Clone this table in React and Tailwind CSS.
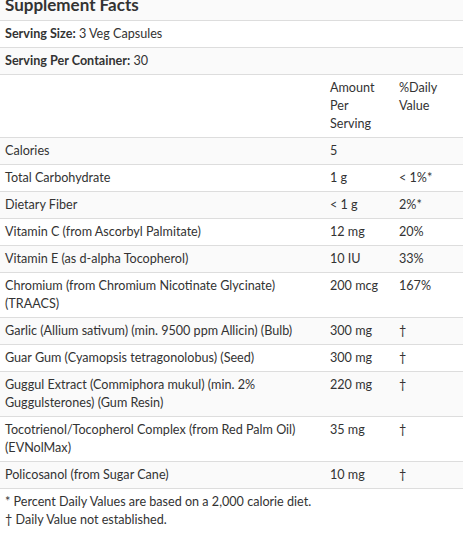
import React from 'react';

const rows = [
    { name: 'Calories', amount: '5', dv: '' },
    { name: 'Total Carbohydrate', amount: '1 g', dv: '< 1%*' },
    { name: 'Dietary Fiber', amount: '< 1 g', dv: '2%*' },
    { name: 'Vitamin C (from Ascorbyl Palmitate)', amount: '12 mg', dv: '20%' },
    { name: 'Vitamin E (as d-alpha Tocopherol)', amount: '10 IU', dv: '33%' },
    { name: 'Chromium (from Chromium Nicotinate Glycinate) (TRAACS)', amount: '200 mcg', dv: '167%' },
    { name: 'Garlic (Allium sativum) (min. 9500 ppm Allicin) (Bulb)', amount: '300 mg', dv: '†' },
    { name: 'Guar Gum (Cyamopsis tetragonolobus) (Seed)', amount: '300 mg', dv: '†' },
    { name: 'Guggul Extract (Commiphora mukul) (min. 2% Guggulsterones) (Gum Resin)', amount: '220 mg', dv: '†' },
    { name: 'Tocotrienol/Tocopherol Complex (from Red Palm Oil) (EVNolMax)', amount: '35 mg', dv: '†' },
    { name: 'Policosanol (from Sugar Cane)', amount: '10 mg', dv: '†' },
];

function Row({ name, amount, dv, shaded }) {
    return (
        <div className={`grid grid-cols-[325px_69px_1fr] border-b border-[#dddddd] ${shaded ? 'bg-[#fafafa]' : 'bg-white'}`}>
            <div className="px-[5px] py-1">{name}</div>
            <div className="px-[5px] py-1">{amount}</div>
            <div className="px-[5px] py-1">{dv}</div>
        </div>
    );
}

export default function App() {
    return (
        <div className="w-[463px] min-h-[533px] bg-white text-[12.6px] leading-[18px] text-[#333333] font-['Lato','Liberation_Sans',sans-serif]">
            <div className="h-[21px] overflow-hidden border-b border-[#dddddd] bg-[#fafafa] px-[5px]">
                <div className="-mt-[7px] text-[17px] leading-[24px] font-bold text-[#333333]">Supplement Facts</div>
            </div>

            <div className="border-b border-[#dddddd] bg-white px-[5px] py-1">
                <span className="font-bold">Serving Size:</span> 3 Veg Capsules
            </div>
            <div className="border-b border-[#dddddd] bg-[#fafafa] px-[5px] py-1">
                <span className="font-bold">Serving Per Container:</span> 30
            </div>

            <div className="grid grid-cols-[325px_69px_1fr] border-b border-[#dddddd] bg-white">
                <div className="px-[5px] py-1"></div>
                <div className="px-[5px] py-1">Amount Per Serving</div>
                <div className="px-[5px] py-1">%Daily Value</div>
            </div>

            {rows.map((r, i) => (
                <Row key={r.name} {...r} shaded={i % 2 === 0} />
            ))}

            <div className="px-[5px] py-1">
                <p>* Percent Daily Values are based on a 2,000 calorie diet.</p>
                <p>† Daily Value not established.</p>
            </div>
        </div>
    );
}
